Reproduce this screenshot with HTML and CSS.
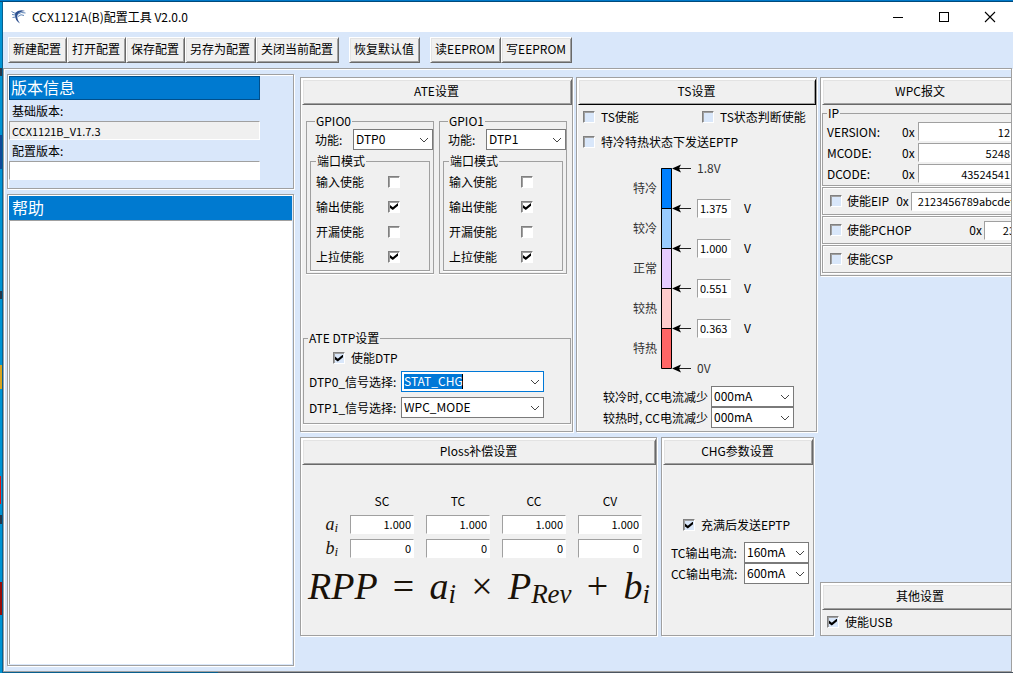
FILE: index.html
```html
<!DOCTYPE html>
<html lang="zh-CN">
<head>
<meta charset="utf-8">
<title>CCX1121A(B)配置工具 V2.0.0</title>
<link rel="stylesheet" href="styles.css">
</head>
<body>
<div class="window">
  <header class="titlebar">
    <svg class="app-icon" width="16" height="16" viewBox="0 0 16 16" aria-hidden="true">
      <path d="M4 4Q8 0 14 2Q8 2.500 6.500 6Q5.500 10 9 14.500Q3.500 11 4 5.500Z" fill="#2c4f8f"/>
      <path d="M.500 2.500L4.500 4.500M1 5.500L4.500 6M1.500 8.500L4.500 8M7 5Q10 2.500 14.500 4M7 7.500Q10 4.500 13 6.500" fill="none" stroke="#5f86b8"/>
    </svg>
    <h1>CCX1121A(B)配置工具 V2.0.0</h1>
    <div class="window-controls">
      <button aria-label="最小化"><svg width="12" height="12"><path d="M1 6.500H11" stroke="#000"/></svg></button>
      <button aria-label="最大化"><svg width="12" height="12"><rect x="1.500" y="1.500" width="9" height="9" fill="none" stroke="#000"/></svg></button>
      <button aria-label="关闭"><svg width="12" height="12"><path d="M1 1L11 11M11 1L1 11" stroke="#000" stroke-width="1.100"/></svg></button>
    </div>
  </header>
  <nav class="toolbar">
    <div class="tool-group"><button class="raised">新建配置</button><button class="raised">打开配置</button><button class="raised">保存配置</button><button class="raised">另存为配置</button><button class="raised">关闭当前配置</button></div>
    <div class="tool-group"><button class="raised">恢复默认值</button></div>
    <div class="tool-group"><button class="raised">读EEPROM</button><button class="raised">写EEPROM</button></div>
  </nav>
  <main class="workspace etched">
    <aside class="side">
      <section class="version etched">
        <h2 class="bar version-bar">版本信息</h2>
        <label for="base">基础版本:</label>
        <input id="base" class="field readonly" value="CCX1121B_V1.7.3" readonly>
        <label for="conf">配置版本:</label>
        <input id="conf" class="field">
      </section>
      <section class="help etched">
        <h2 class="bar">帮助</h2>
        <textarea class="help-text" aria-label="帮助" readonly></textarea>
      </section>
    </aside>
    <div class="settings">
      <div class="row row-top">
        <section class="panel etched ate">
          <button class="raised heading">ATE设置</button>
          <div class="gpios">
            <fieldset class="gpio"><legend>GPIO0</legend>
              <div class="function"><label for="f0">功能:</label><span class="combo"><select id="f0"><option>DTP0</option></select><svg width="10" height="6"><path d="M1 1L5 5L9 1"/></svg></span></div>
              <fieldset class="port"><legend>端口模式</legend>
                <label>输入使能<input type="checkbox" class="white"></label>
                <label>输出使能<input type="checkbox" class="white" checked></label>
                <label>开漏使能<input type="checkbox" class="white"></label>
                <label>上拉使能<input type="checkbox" class="white" checked></label>
              </fieldset>
            </fieldset>
            <fieldset class="gpio"><legend>GPIO1</legend>
              <div class="function"><label for="f1">功能:</label><span class="combo"><select id="f1"><option>DTP1</option></select><svg width="10" height="6"><path d="M1 1L5 5L9 1"/></svg></span></div>
              <fieldset class="port"><legend>端口模式</legend>
                <label>输入使能<input type="checkbox" class="white"></label>
                <label>输出使能<input type="checkbox" class="white" checked></label>
                <label>开漏使能<input type="checkbox" class="white"></label>
                <label>上拉使能<input type="checkbox" class="white" checked></label>
              </fieldset>
            </fieldset>
          </div>
          <fieldset class="dtp"><legend>ATE DTP设置</legend>
            <label class="check dtp-enable"><input type="checkbox" checked>使能DTP</label>
            <div class="signal"><label for="d0">DTP0_信号选择:</label><span class="combo active"><select id="d0"><option>STAT_CHG</option></select><svg width="10" height="6"><path d="M1 1L5 5L9 1"/></svg></span></div>
            <div class="signal"><label for="d1">DTP1_信号选择:</label><span class="combo"><select id="d1"><option>WPC_MODE</option></select><svg width="10" height="6"><path d="M1 1L5 5L9 1"/></svg></span></div>
          </fieldset>
        </section>
        <section class="panel etched ts">
          <button class="raised heading default">TS设置</button>
          <div class="ts-checks">
            <label class="check"><input type="checkbox">TS使能</label>
            <label class="check"><input type="checkbox">TS状态判断使能</label>
            <label class="check wide">
              <input type="checkbox">特冷特热状态下发送EPTP</label>
          </div>
          <div class="scale">
            <div class="zones"><span>特冷</span><span>较冷</span><span>正常</span><span>较热</span><span>特热</span></div>
            <svg width="30" height="212" viewBox="0 0 30 212" aria-hidden="true">
              <rect x="0" y="6" width="11" height="40" fill="#0080ff"/>
              <rect x="0" y="46" width="11" height="40" fill="#99ccff"/>
              <rect x="0" y="86" width="11" height="40" fill="#e5ccff"/>
              <rect x="0" y="126" width="11" height="40" fill="#ffcccc"/>
              <rect x="0" y="166" width="11" height="40" fill="#ff6666"/>
              <path d="M.500 6.500H10.500V206.500H.500ZM0 46.500H11M0 86.500H11M0 126.500H11M0 166.500H11" fill="none" stroke="#000"/>
              <path d="M16 6.500H30M16 46.500H30M16 86.500H30M16 126.500H30M16 166.500H30M16 206.500H30" stroke="#222"/>
              <path d="M11 6.500l9-4-2 4 2 4zM11 46.500l9-4-2 4 2 4zM11 86.500l9-4-2 4 2 4zM11 126.500l9-4-2 4 2 4zM11 166.500l9-4-2 4 2 4zM11 206.500l9-4-2 4 2 4z"/>
            </svg>
            <div class="values">
              <span class="limit">1.8V</span>
              <label><input class="field" value="1.375">V</label>
              <label><input class="field" value="1.000">V</label>
              <label><input class="field" value="0.551">V</label>
              <label><input class="field" value="0.363">V</label>
              <span class="limit">0V</span>
            </div>
          </div>
          <div class="reduce">
            <label for="r0">较冷时, CC电流减少</label><span class="combo"><select id="r0"><option>000mA</option></select><svg width="10" height="6"><path d="M1 1L5 5L9 1"/></svg></span>
            <label for="r1">较热时, CC电流减少</label><span class="combo"><select id="r1"><option>000mA</option></select><svg width="10" height="6"><path d="M1 1L5 5L9 1"/></svg></span>
          </div>
        </section>
      </div>
      <div class="row row-bottom">
        <section class="panel etched ploss">
          <button class="raised heading">Ploss补偿设置</button>
          <table class="coefficients">
            <thead><tr><td></td><th>SC</th><th>TC</th><th>CC</th><th>CV</th></tr></thead>
            <tbody>
              <tr><th class="math">a<sub>i</sub></th><td><input class="field" aria-label="a SC" value="1.000"></td><td><input class="field" aria-label="a TC" value="1.000"></td><td><input class="field" aria-label="a CC" value="1.000"></td><td><input class="field" aria-label="a CV" value="1.000"></td></tr>
              <tr><th class="math">b<sub>i</sub></th><td><input class="field" aria-label="b SC" value="0"></td><td><input class="field" aria-label="b TC" value="0"></td><td><input class="field" aria-label="b CC" value="0"></td><td><input class="field" aria-label="b CV" value="0"></td></tr>
            </tbody>
          </table>
          <div class="formula math"><span>RPP</span><span class="op">=</span><span>a<sub>i</sub></span><span class="op">×</span><span>P<sub>Rev</sub></span><span class="op">+</span><span>b<sub>i</sub></span></div>
        </section>
        <section class="panel etched chg">
          <button class="raised heading">CHG参数设置</button>
          <label class="check chg-enable"><input type="checkbox" checked>充满后发送EPTP</label>
          <div class="currents">
            <label for="c0">TC输出电流:</label><span class="combo"><select id="c0"><option>160mA</option></select><svg width="10" height="6"><path d="M1 1L5 5L9 1"/></svg></span>
            <label for="c1">CC输出电流:</label><span class="combo"><select id="c1"><option>600mA</option></select><svg width="10" height="6"><path d="M1 1L5 5L9 1"/></svg></span>
          </div>
        </section>
      </div>
    </div>
    <div class="packets">
      <section class="panel etched wpc">
        <button class="raised heading">WPC报文</button>
        <fieldset class="ip"><legend>IP</legend>
          <label><span>VERSION:</span><span>0x</span><input class="field" value="12"></label>
          <label><span>MCODE:</span><span>0x</span><input class="field" value="5248"></label>
          <label><span>DCODE:</span><span>0x</span><input class="field" value="43524541"></label>
        </fieldset>
        <div class="option etched"><label class="check"><input type="checkbox">使能EIP</label><label class="hex" for="eip">0x</label><input id="eip" class="field eip" value="2123456789abcdef"></div>
        <div class="option etched"><label class="check"><input type="checkbox">使能PCHOP</label><label class="hex push" for="pchop">0x</label><input id="pchop" class="field pchop" value="23"></div>
        <div class="option etched"><label class="check"><input type="checkbox">使能CSP</label></div>
      </section>
      <section class="panel etched other">
        <button class="raised heading">其他设置</button>
        <label class="check usb"><input type="checkbox" checked>使能USB</label>
      </section>
    </div>
  </main>
</div>
</body>
</html>
```

FILE: styles.css
```css
* { box-sizing: border-box; }
body {
  margin: 0;
  height: 100vh;
  padding: 2px 0 1px 3px;
  background:
    linear-gradient(#004a7c, #004a7c) 0 1px / 100% 1px no-repeat,
    linear-gradient(#0079c9, #0079c9) 0 0 / 100% 1px no-repeat,
    linear-gradient(#24364a, #24364a) 0 68px / 2px 8px no-repeat,
    linear-gradient(#104a98, #104a98) 0 135px / 2px 34px no-repeat,
    linear-gradient(#24364a, #24364a) 0 291px / 2px 8px no-repeat,
    linear-gradient(#d9a520, #d9a520) 0 365px / 2px 24px no-repeat,
    linear-gradient(#e01010, #e01010) 0 476px / 1px 28px no-repeat,
    linear-gradient(#24364a, #24364a) 0 515px / 2px 9px no-repeat,
    linear-gradient(#980c08, #980c08) 0 582px / 2px 33px no-repeat,
    linear-gradient(90deg, #0094d4 2px, #08608f 2px 218px, #4b5560 218px);
  font: 12px/16px "Noto Sans CJK SC", sans-serif;
  color: #000;
}
button, input, select, textarea { font: inherit; color: inherit; margin: 0; border-radius: 0; }
h1, h2 { margin: 0; font-weight: 400; }
label { white-space: nowrap; }
.window { height: 100%; min-height: 600px; display: flex; flex-direction: column; background: #d9e7fa; overflow: hidden; }
.titlebar { flex: none; height: 30px; display: flex; align-items: center; padding-left: 8px; gap: 5px; background: #fff; }
.titlebar h1 { font-size: 12px; }
.window-controls { margin-left: auto; display: flex; }
.window-controls button { width: 46px; height: 28px; padding: 0; border: 0; background: none; display: grid; place-items: center; }
.toolbar { flex: none; height: 36px; display: flex; align-items: center; gap: 10px; padding-left: 5px; }
.tool-group { display: flex; }
.raised {
  height: 26px;
  padding: 0 5px 2px 4px;
  background: #f0f0f0;
  border: 1px solid #fff;
  border-right-color: #696969;
  border-bottom-color: #696969;
  box-shadow: inset 1px 1px #e3e3e3, inset -1px -1px #a0a0a0;
  white-space: nowrap;
}
.etched { border: 1px solid #a0a0a0; box-shadow: inset 1px 1px #fff, 1px 1px #fff; }
.workspace { flex: 1; min-height: 0; display: flex; margin-right: 1px; padding: 5px 0 5px 3px; overflow: hidden; }
.side { flex: none; width: 287px; display: flex; flex-direction: column; gap: 5px; }
.version { padding: 1px 1px 8px; display: flex; flex-direction: column; align-items: stretch; }
.version label { padding: 3px 3px 2px; }
.version .field, .version-bar { width: 251px; }
.bar { height: 24px; padding-left: 3px; background: #007ad0; color: #fff; font-size: 16px; line-height: 22px; }
.version-bar { border: 1px solid #004f8c; padding-left: 1px; line-height: 20px; }
.help { flex: 1; min-height: 0; display: flex; flex-direction: column; padding: 1px; }
.help-text { flex: 1; width: 100%; border: 1px solid #a0a0a0; border-right: 0; border-bottom: 0; background: #fff; resize: none; outline: 0; }
.field {
  height: 19px;
  min-width: 0;
  padding: 0 2px;
  border: 1px solid #fff;
  border-top-color: #a0a0a0;
  border-left-color: #a0a0a0;
  background: #fff;
  font-size: 11px;
  outline: 0;
}
.readonly { background: #f0f0f0; }
.settings { flex: none; margin: 3px 3px 30px 6px; display: flex; flex-direction: column; gap: 5px; }
.row { display: flex; }
.row-top { flex: 355 0 auto; gap: 3px; }
.row-bottom { flex: none; min-height: 199px; gap: 4px; }
.panel { display: flex; flex-direction: column; padding: 1px 0 1px 1px; background: #f0f0f0; }
.heading { flex: none; width: 100%; height: 26px; }
.default { border-right-color: #000; border-bottom-color: #000; }
.ate { width: 273px; }
fieldset { min-width: 0; margin: 0; padding: 0; border: 1px solid #a0a0a0; box-shadow: 0 1px #fff; }
legend { padding: 0 1px; margin-left: 5px; line-height: 16px; }
.gpios { display: flex; gap: 5px; padding: 8px 4px 0; }
.gpio { width: 128px; padding: 0 3px 2px; }
.function { display: flex; justify-content: space-between; align-items: center; padding-left: 5px; margin-right: -3px; }
.function .combo { width: 80px; }
.combo { display: inline-grid; align-items: center; }
.combo select {
  grid-area: 1 / 1;
  width: 100%;
  height: 21px;
  padding: 0 2px 1px;
  border: 1px solid #7a7a7a;
  background-color: #fff;
  appearance: none;
  outline: 0;
}
.combo svg { grid-area: 1 / 1; justify-self: end; margin-right: 4px; pointer-events: none; fill: none; stroke: #444; }
.combo.active select {
  border-color: #0078d7;
  color: #fff;
  background:
    linear-gradient(#000, #000) 60px center / 1px 15px no-repeat,
    linear-gradient(#0078d7, #0078d7) 2px center / 58px 15px no-repeat,
    #fff;
}
.port { width: 120px; margin-top: 3px; padding: 0 5px 1px; }
.port legend { margin-left: 0; }
.port label { height: 25px; display: flex; align-items: center; gap: 24px; }
input[type="checkbox"] {
  appearance: none;
  flex: none;
  width: 12px;
  height: 12px;
  border: 1px solid #fff;
  border-top-color: #808080;
  border-left-color: #808080;
  box-shadow: inset 1px 1px #a0a0a0;
  background: #d9e7fa;
  display: grid;
  place-items: center;
}
input[type="checkbox"].white { background: #fff; }
input[type="checkbox"]:checked::before {
  content: "";
  width: 8px;
  height: 7px;
  background: #000;
  clip-path: polygon(0 30%, 35% 60%, 100% 0, 100% 40%, 35% 100%, 0 70%);
}
.check { display: flex; align-items: center; gap: 6px; }
.dtp { margin: auto 1px 6px; padding: 0 4px 5px; }
.dtp legend { margin-left: 0; }
.dtp-enable { padding: 4px 0 5px 25px; }
.signal { display: flex; justify-content: space-between; align-items: center; padding-right: 22px; margin-bottom: 5px; }
.signal:last-child { margin-bottom: 0; }
.signal .combo { width: 143px; }
.signal label { padding-left: 1px; }
.ts { width: 241px; }
.ts-checks { display: grid; grid-template-columns: 119px 1fr; row-gap: 9px; padding: 4px 0 0 5px; }
.ts-checks .wide { grid-column: span 2; }
.scale { display: flex; align-items: center; margin: -2px 0 -8px; padding-left: 55px; }
.zones { display: flex; flex-direction: column; width: 28px; }
.zones span { height: 40px; line-height: 40px; color: #333; }
.values { margin-left: 6px; }
.values > * { height: 40px; display: flex; align-items: center; gap: 13px; }
.values .field { width: 34px; }
.limit { color: #333; }
.reduce { display: grid; grid-template-columns: max-content 83px; align-items: center; justify-content: end; column-gap: 3px; margin-top: auto; padding: 0 22px 2px 0; }
.ploss { width: 357px; }
.coefficients { align-self: flex-start; border-collapse: collapse; margin: 25px 0 0 9px; }
.coefficients th, .coefficients td { padding: 0 0 0 12px; font-weight: 400; height: 24px; text-align: center; }
.coefficients thead th, .coefficients thead td { height: 22px; }
.coefficients .math { width: 27px; padding: 0; font-size: 18px; line-height: 20px; text-align: right; }
.coefficients .field { display: block; width: 64px; text-align: right; }
.math { font-family: "Liberation Serif", serif; font-style: italic; color: #1a1208; }
.math sub { font-size: 13px; line-height: 0; vertical-align: -2px; }
.formula { display: flex; justify-content: space-between; align-items: center; margin-top: 2px; padding: 0 6px; font-size: 38px; line-height: 48px; }
.formula sub { font-size: 27px; vertical-align: -4px; }
.formula .op { font-style: normal; }
.chg { width: 153px; }
.chg-enable { padding: 52px 0 0 20px; }
.currents { display: grid; grid-template-columns: 1fr 65px; align-items: center; column-gap: 6px; margin-top: 9px; padding: 0 4px 0 8px; }
.packets { flex: 1; min-width: 0; margin: 3px 0 30px; display: flex; flex-direction: column; justify-content: space-between; overflow: hidden; }
.packets .panel { width: 100%; min-width: 200px; }
.ip { margin: 1px 0; padding: 1px 3px 1px 4px; }
.ip legend { margin-left: 0; line-height: 14px; }
.ip label { height: 21px; display: grid; grid-template-columns: 75px 16px 1fr; align-items: center; }
.ip .field { text-align: right; padding-right: 4px; }
.option { height: 28px; margin-bottom: 1px; padding: 0 0 0 7px; display: flex; align-items: center; }
.option .check { gap: 5px; }
.hex { margin: 0 2px 0 7px; }
.push { margin-left: auto; }
.eip { flex: 1; padding-left: 6px; }
.pchop { width: 34px; text-align: right; }
.usb { padding: 4px 0 4px 5px; }
```
